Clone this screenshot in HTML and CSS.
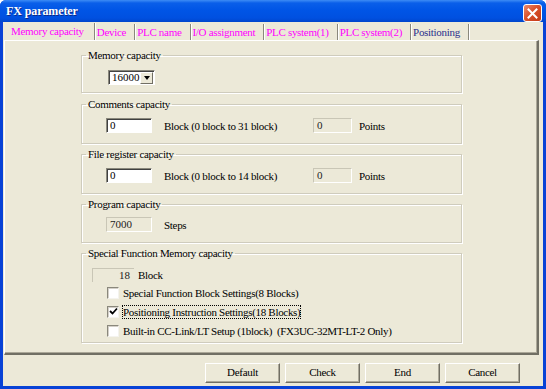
FILE: index.html
```html
<!DOCTYPE html>
<html lang="en">
  <head>
    <meta charset="UTF-8" />
    <title>FX parameter</title>
    <link rel="stylesheet" href="styles.css">
  </head>
  <body>
    <div class="window">
      <div class="titlebar">
        <span class="title">FX parameter</span>
        <span class="close">
          <svg width="11" height="11" viewBox="0 0 11 11">
            <path d="M1.5 1.5 L9.5 9.5 M9.5 1.5 L1.5 9.5" stroke="#fff" stroke-width="2" stroke-linecap="square" />
          </svg>
        </span>
      </div>
      <div class="client">
        <div class="tabs">
          <span class="tab active">Memory capacity</span>
          <span class="tab">Device</span>
          <span class="tab">PLC name</span>
          <span class="tab">I/O assignment</span>
          <span class="tab">PLC system(1)</span>
          <span class="tab">PLC system(2)</span>
          <span class="tab navy">Positioning</span>
        </div>
        <div class="panel">
          <fieldset class="group g-memory">
            <legend>Memory capacity</legend>
            <div class="combo">
              <span class="combo-value">16000</span>
              <span class="combo-btn"><span class="arrow"></span></span>
            </div>
          </fieldset>

          <fieldset class="group">
            <legend>Comments capacity</legend>
            <div class="row">
              <span class="edit">0</span>
              <span class="txt">Block (0 block to 31 block)</span>
              <span class="ro">0</span>
              <span class="txt">Points</span>
            </div>
          </fieldset>

          <fieldset class="group">
            <legend>File register capacity</legend>
            <div class="row">
              <span class="edit">0</span>
              <span class="txt">Block (0 block to 14 block)</span>
              <span class="ro">0</span>
              <span class="txt">Points</span>
            </div>
          </fieldset>

          <fieldset class="group g-program">
            <legend>Program capacity</legend>
            <div class="row">
              <span class="ro wide">7000</span>
              <span class="txt">Steps</span>
            </div>
          </fieldset>

          <fieldset class="group g-special">
            <legend>Special Function Memory capacity</legend>
            <div class="blocks">
              <span class="ro count">18</span>
              <span class="txt">Block</span>
            </div>
            <div class="check-row">
              <span class="checkbox"></span>
              <span class="txt">Special Function Block Settings(8 Blocks)</span>
            </div>
            <div class="check-row">
              <span class="checkbox">
                <svg width="9" height="9" viewBox="0 0 9 9">
                  <path d="M1 4 L3.5 6.5 L8 1.5" stroke="#000" stroke-width="1.8" fill="none" />
                </svg>
              </span>
              <span class="txt focus">Positioning Instruction Settings(18 Blocks)</span>
            </div>
            <div class="check-row">
              <span class="checkbox"></span>
              <span class="txt">Built-in CC-Link/LT Setup (1block)&nbsp; (FX3UC-32MT-LT-2 Only)</span>
            </div>
          </fieldset>
        </div>
        <div class="buttons">
          <span class="btn">Default</span>
          <span class="btn">Check</span>
          <span class="btn">End</span>
          <span class="btn">Cancel</span>
        </div>
      </div>
    </div>
  </body>
</html>
```

FILE: styles.css
```css
* {
  box-sizing: border-box;
}
body {
  margin: 0;
  background: #fff;
  font-family: "Liberation Serif", "Times New Roman", serif;
  font-size: 11px;
  color: #000;
}
.window {
  width: 546px;
  height: 389px;
  display: flex;
  flex-direction: column;
  background: #0842d6;
  border-radius: 6px 6px 0 0;
  overflow: hidden;
}
.titlebar {
  height: 22px;
  flex: none;
  display: flex;
  align-items: center;
  justify-content: space-between;
  padding: 0 4px 0 6px;
  background: linear-gradient(#3d8cf5 0px, #0a5fe9 3px, #0055e6 10px, #0050e0 18px, #0046cc 22px);
}
.title {
  color: #fff;
  font-weight: bold;
  font-size: 12px;
  letter-spacing: -0.1px;
  text-shadow: 1px 1px 0 #0a2a8a;
}
.close {
  width: 19px;
  height: 18px;
  margin-top: 4px;
  display: flex;
  align-items: center;
  justify-content: center;
  border: 1px solid #fff;
  border-radius: 3px;
  background: linear-gradient(135deg, #e98a6c, #d9522c 45%, #c43a17);
}
.client {
  flex: 1;
  margin: 0 3px 3px 3px;
  background: #ece9d8;
  display: flex;
  flex-direction: column;
}
.tabs {
  height: 17px;
  margin-top: 1px;
  padding-left: 1px;
  display: flex;
  align-items: flex-end;
}
.tab {
  height: 16px;
  line-height: 16px;
  padding: 0 8px 0 2px;
  color: #ff00ff;
  border-right: 1px solid #8a887c;
  box-shadow: 1px 0 0 #fff;
  letter-spacing: -0.3px;
  white-space: nowrap;
}
.tab.active {
  height: 17px;
  padding-left: 7px;
  padding-right: 10px;
}
.tab.navy {
  color: #2b2f8c;
}
.panel {
  height: 315px;
  margin-left: 1px;
  width: 535px;
  border-top: 1px solid #fff;
  border-left: 1px solid #fff;
  border-right: 2px solid #716f64;
  border-bottom: 2px solid #716f64;
  box-shadow: inset -1px -1px 0 #aca899;
  padding: 7px 0 0 76px;
  display: flex;
  flex-direction: column;
  gap: 3px;
}
.group {
  margin: 0;
  width: 381px;
  min-inline-size: 0;
  border: 1px solid #cfccbd;
  box-shadow: 1px 1px 0 #fff, inset 1px 1px 0 #fff;
  padding: 7px 0 10px 0;
}
.group legend {
  margin-left: 4px;
  padding: 0 2px;
  line-height: 14px;
  letter-spacing: -0.3px;
}
.g-memory {
  padding: 8px 0 7px 0;
  margin-bottom: 1px;
}
.g-program {
  padding: 6px 0 10px 0;
}
.g-special {
  padding: 8px 0 2px 0;
}
.txt {
  letter-spacing: -0.3px;
  white-space: nowrap;
}
.combo {
  width: 47px;
  height: 15px;
  margin-left: 26px;
  display: flex;
  align-items: center;
  background: #fff;
  border-top: 1px solid #8a887c;
  border-left: 1px solid #8a887c;
  border-right: 1px solid #fff;
  border-bottom: 1px solid #fff;
  box-shadow: inset 1px 1px 0 #444;
}
.combo-value {
  flex: 1;
  padding-left: 3px;
  line-height: 13px;
}
.combo-btn {
  width: 13px;
  height: 12px;
  margin-right: 1px;
  background: #ece9d8;
  border-top: 1px solid #fff;
  border-left: 1px solid #fff;
  border-right: 1px solid #716f64;
  border-bottom: 1px solid #716f64;
  display: flex;
  align-items: center;
  justify-content: center;
}
.arrow {
  width: 0;
  height: 0;
  border-left: 3.5px solid transparent;
  border-right: 3.5px solid transparent;
  border-top: 4px solid #000;
}
.row {
  display: grid;
  grid-template-columns: 58px 149px 46px auto;
  align-items: center;
  height: 15px;
  margin-left: 24px;
}
.g-program .row {
  grid-template-columns: 58px auto;
}
.edit,
.ro {
  height: 15px;
  line-height: 13px;
  padding-left: 3px;
  border-top: 1px solid #8a887c;
  border-left: 1px solid #8a887c;
  border-right: 1px solid #fff;
  border-bottom: 1px solid #fff;
}
.edit {
  width: 46px;
  background: #fff;
  box-shadow: inset 1px 1px 0 #404040;
}
.ro {
  width: 39px;
  background: #ece9d8;
  border-top-color: #c9c6b6;
  border-left-color: #c9c6b6;
  color: #222;
}
.ro.wide {
  width: 46px;
}
.blocks {
  display: flex;
  align-items: center;
  height: 14px;
  margin-left: 10px;
}
.ro.count {
  width: 42px;
  height: 14px;
  padding: 0 4px 0 0;
  text-align: right;
  margin-right: 4px;
  border-right: none;
  border-bottom: none;
}
.check-row {
  height: 19px;
  display: flex;
  align-items: center;
  margin-left: 25px;
}
.blocks + .check-row {
  margin-top: 1px;
}
.checkbox {
  width: 12px;
  height: 12px;
  margin-right: 4px;
  background: #fff;
  border-top: 1px solid #8a887c;
  border-left: 1px solid #8a887c;
  border-right: 1px solid #f4f3ee;
  border-bottom: 1px solid #f4f3ee;
  box-shadow: inset 1px 1px 0 #d4d0c8;
  display: flex;
  align-items: center;
  justify-content: center;
}
.focus {
  outline: 1px dotted #000;
  outline-offset: 0;
}
.buttons {
  display: flex;
  justify-content: flex-start;
  gap: 5px;
  padding-left: 202px;
  margin-top: 8px;
}
.btn {
  width: 75px;
  height: 20px;
  line-height: 17px;
  text-align: center;
  letter-spacing: -0.3px;
  background: #ece9d8;
  border-top: 1px solid #fff;
  border-left: 1px solid #fff;
  border-right: 1px solid #716f64;
  border-bottom: 1px solid #716f64;
  box-shadow: inset -1px -1px 0 #aca899;
}
```
